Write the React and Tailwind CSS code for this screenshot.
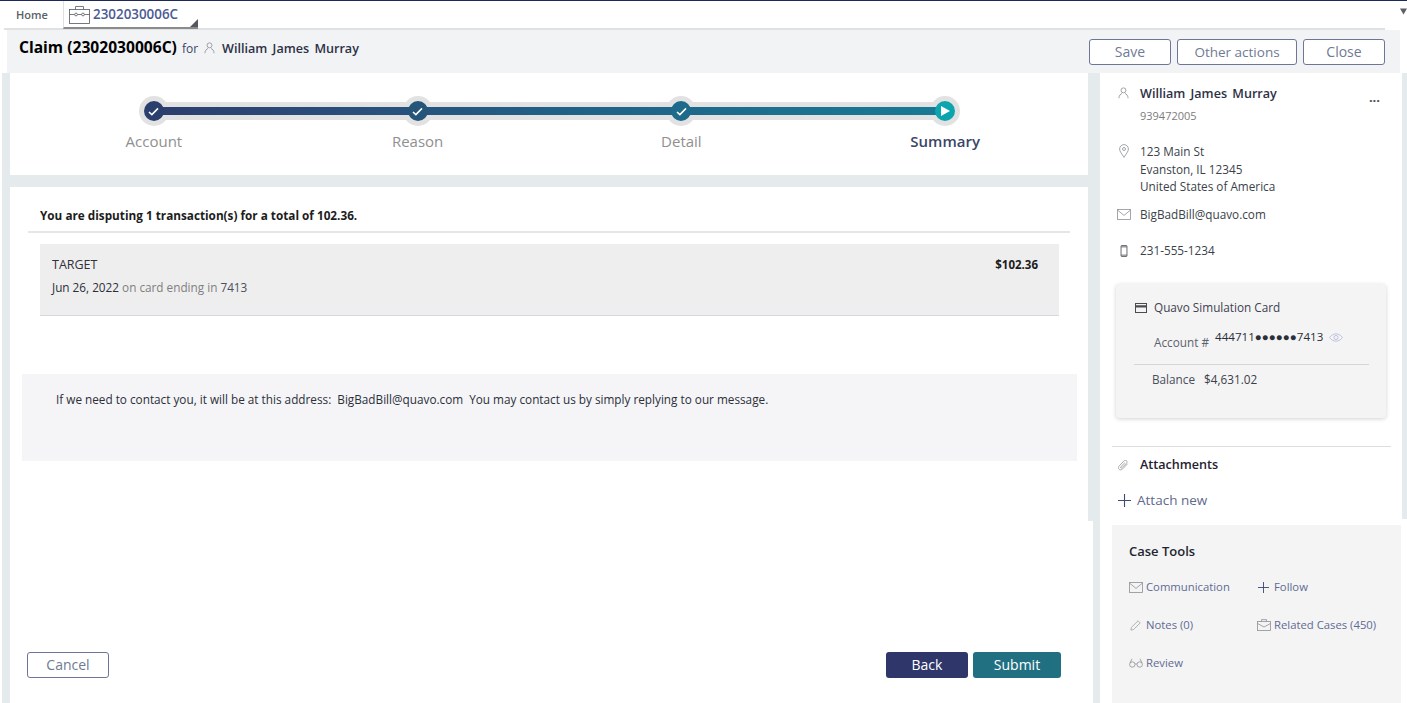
const ink = '#2b2f3a';

function PersonIcon({ className }) {
  return (
    <svg viewBox="0 0 12 13" fill="none" stroke="#8d9096" strokeWidth="0.9" className={className}>
      <circle cx="6" cy="3.6" r="2.7" />
      <path d="M1 12.2c0-3 2-4.7 3.4-5.2M11 12.2c0-3-2-4.7-3.4-5.2" />
    </svg>
  );
}

function MailIcon({ className }) {
  return (
    <svg viewBox="0 0 14 11" fill="none" stroke="#8d9096" strokeWidth="0.8" className={className}>
      <rect x="0.5" y="0.5" width="13" height="10" />
      <path d="M0.7 1.2 7 6.4l6.3-5.2" />
    </svg>
  );
}

function PlusIcon({ className }) {
  return (
    <svg viewBox="0 0 13 13" fill="none" stroke="#3f4a78" strokeWidth="1.1" className={className}>
      <path d="M6.5 0v13M0 6.5h13" />
    </svg>
  );
}

function Check() {
  return (
    <svg viewBox="0 0 12 10" fill="none" stroke="#fff" strokeWidth="1.7" className="w-[11px] h-[9px]">
      <path d="M1 5.5 4.2 8.5 11 1.5" />
    </svg>
  );
}

function Step({ label, current, color }) {
  return (
    <div className="flex flex-col items-center">
      <div className="w-[30px] h-[30px] rounded-full bg-[#e2e2e2] flex items-center justify-center">
        <div className="relative z-[2] w-[20px] h-[20px] rounded-full flex items-center justify-center" style={{ backgroundColor: color }}>
          {current ? (
            <svg viewBox="0 0 9 10" className="w-[9px] h-[10px] ml-[1px]"><path d="M0 0 9 5 0 10z" fill="#fff" /></svg>
          ) : <Check />}
        </div>
      </div>
      <div className={current ? "mt-[5px] text-[15px] leading-[20px] font-semibold text-[#3a4468]" : "mt-[5px] text-[15px] leading-[20px] text-[#8f8f8f]"}>{label}</div>
    </div>
  );
}

function OutlineBtn({ children, className }) {
  return (
    <button className={"h-[26px] rounded-[3px] border border-[#6f7599] bg-white leading-[22px] text-[#6f7a94] " + className}>{children}</button>
  );
}

function ToolLink({ icon, children }) {
  return (
    <div className="flex items-center h-[16px] text-[11.3px] text-[#5f6b95]">
      <span className="w-[17px] flex items-center shrink-0">{icon}</span>
      {children}
    </div>
  );
}

export default function App() {
  return (
    <div className="w-[1407px] h-[703px] overflow-hidden bg-white font-['Open_Sans',sans-serif] text-[11.75px]" style={{ color: ink }}>
      <div className="h-[1px] bg-[#1f2a5c]" />

      {/* tab bar */}
      <div className="h-[29px] flex items-start ml-[4px] mr-[22px] border-b-2 border-[#dfe1e3] relative">
        <div className="w-[59px] h-[27px] pl-[12px] text-[11px] font-semibold leading-[27px] text-[#5b5f66]">Home</div>
        <div className="w-[135px] h-[28px] border-l border-[#e0e0e0] border-b-2 border-b-[#8b8b8b] flex items-center pl-[5px] relative">
          <svg viewBox="0 0 21 19" fill="none" stroke="#55585e" strokeWidth="0.8" className="w-[21px] h-[19px]">
            <rect x="0.5" y="4.5" width="20" height="14" />
            <path d="M6.5 4.5V1.5h8v3M0.5 9.500h5M15.500 9.500h5M8.500 9.500h4" />
            <circle cx="7" cy="9.500" r="1.400" />
            <circle cx="14" cy="9.500" r="1.400" />
          </svg>
          <span className="ml-[3px] text-[13.4px] font-semibold text-[#4b5a92]">2302030006C</span>
          <svg viewBox="0 0 8 8" className="absolute right-0 bottom-0 w-[8px] h-[8px]"><path d="M8 0v8H0z" fill="#55585e" /></svg>
        </div>
        <svg viewBox="0 0 8 7" className="absolute right-[-22px] top-[7px] w-[7px] h-[7px]"><path d="M0 0h8L4 7z" fill="#5c5f66" /></svg>
      </div>

      {/* case header */}
      <div className="h-[43px] ml-[7px] w-[1393px] bg-[#f1f3f5] flex items-center justify-between pl-[12px] pr-[15px]">
        <div className="flex items-baseline mb-[7px]">
          <span className="text-[15.6px] font-bold text-black">Claim (2302030006C)</span>
          <span className="ml-[5px] text-[12px] text-[#3d4468]">for</span>
          <PersonIcon className="ml-[6px] w-[11px] h-[12px] self-center" />
          <span className="ml-[7px] text-[12.6px] font-semibold [word-spacing:2px] text-[#2d3145]">William James Murray</span>
        </div>
        <div className="flex gap-[6px] mt-[1px]">
          <OutlineBtn className="w-[82px] text-[14px]">Save</OutlineBtn>
          <OutlineBtn className="w-[120px] text-[13.5px]">Other actions</OutlineBtn>
          <OutlineBtn className="w-[82px] text-[14px]">Close</OutlineBtn>
        </div>
      </div>

      {/* body */}
      <div className="h-[630px] ml-[2px] pl-[8px] bg-[#e5eaed] flex">
        <div className="w-[1083px] flex flex-col">
          <div className="w-[1078px] h-[102px] bg-white pt-[23px] pl-[12px]">
            <div className="relative w-[1055px] grid grid-cols-4">
              <div className="absolute z-[1] left-[132px] right-[132px] top-[6px] h-[18px] bg-[#e2e2e2]">
                <div className="mt-[5px] h-[8px] bg-gradient-to-r from-[#2c3e6e] via-[#205f86] to-[#177b95]" />
              </div>
              <Step label="Account" color="#2b3f6e" />
              <Step label="Reason" color="#255578" />
              <Step label="Detail" color="#1d6a8a" />
              <Step label="Summary" current color="#0da5ad" />
            </div>
          </div>

          <div className="mt-[12px] w-[1078px] h-[334px] bg-white pt-[20px]">
            <div className="ml-[18px] w-[1042px] h-[26px] border-b-2 border-[#e6e6e6] pl-[12px] font-bold text-[#1c1c1c] leading-[17px]">
              You are disputing 1 transaction(s) for a total of 102.36.
            </div>
            <div className="mt-[11px] ml-[30px] w-[1019px] h-[72px] bg-[#eeeeee] border-b border-[#d5d8de] flex justify-between pl-[12px] pr-[21px] pt-[12px]">
              <div>
                <div className="text-[12.5px] leading-[17px] text-[#33303a]">TARGET</div>
                <div className="mt-[6px] leading-[17px]">
                  Jun 26, 2022 <span className="text-[#7f7f7f]">on card ending in</span> <span className="text-[#4a4e5a]">7413</span>
                </div>
              </div>
              <div className="text-[11.5px] font-bold leading-[17px] text-[#1c1c1c]">$102.36</div>
            </div>
            <div className="mt-[58px] ml-[12px] w-[1055px] h-[87px] bg-[#f5f5f7] pl-[34px] pt-[17px] leading-[17px] whitespace-pre">
              If we need to contact you, it will be at this address:  BigBadBill@quavo.com  You may contact us by simply replying to our message.
            </div>
          </div>

          <div className="flex-1 bg-white flex items-end justify-between pl-[17px] pr-[32px] pb-[25px]">
            <OutlineBtn className="w-[82px] text-[14px]">Cancel</OutlineBtn>
            <div className="flex gap-[5px]">
              <button className="w-[82px] h-[26px] pb-[2px] rounded-[3px] bg-[#2f366a] text-white text-[14px]">Back</button>
              <button className="w-[88px] h-[26px] pb-[2px] rounded-[3px] bg-[#217082] text-white text-[14px]">Submit</button>
            </div>
          </div>
        </div>

        {/* right column */}
        <div className="ml-[7px] w-[307px] flex flex-col">
          <div className="w-[302px] h-[446px] bg-white pt-[12px]">
            <div className="flex items-start pl-[18px] pr-[22px]">
              <PersonIcon className="mt-[2px] w-[11px] h-[12px]" />
              <div className="ml-[11px] flex-1">
                <div className="flex justify-between">
                  <span className="text-[12.6px] font-semibold leading-[18px] [word-spacing:2px] text-[#2d3145]">William James Murray</span>
                  <span className="text-[13px] font-bold leading-[24px] text-[#4a4e5a]">...</span>
                </div>
                <div className="text-[11px] leading-[13px] text-[#7c7c7c]">939472005</div>
              </div>
            </div>

            <div className="mt-[21px] flex items-start pl-[19px]">
              <svg viewBox="0 0 10 14" fill="none" stroke="#8d9096" strokeWidth="0.8" className="mt-[1px] w-[10px] h-[14px]">
                <path d="M5 13.400C3 10 .6 7.600.6 5a4.400 4.400 0 0 1 8.800 0c0 2.600-2.400 5-4.400 8.400z" />
                <circle cx="5" cy="5" r="1.500" />
              </svg>
              <div className="ml-[11px] leading-[17.5px] text-[#3b3f4a]">
                <div>123 Main St</div>
                <div>Evanston, IL 12345</div>
                <div>United States of America</div>
              </div>
            </div>

            <div className="mt-[10px] flex items-center pl-[17px] h-[18px] text-[#3b3f4a]">
              <MailIcon className="w-[14px] h-[11px]" />
              <span className="ml-[9px]">BigBadBill@quavo.com</span>
            </div>

            <div className="mt-[18px] flex items-center pl-[20px] h-[18px] text-[#3b3f4a]">
              <svg viewBox="0 0 8 13" fill="none" stroke="#5d6068" strokeWidth="1" className="w-[8px] h-[12px]">
                <rect x="0.800" y="0.500" width="6.400" height="12" rx="0.800" />
                <path d="M0.800 2h6.400M0.800 11h6.400" />
              </svg>
              <span className="ml-[12px]">231-555-1234</span>
            </div>

            <div className="mt-[24px] ml-[16px] w-[270px] h-[134px] bg-[#f4f4f4] rounded-[4px] shadow-[0_1px_4px_rgba(0,0,0,0.18)] pt-[15px]">
              <div className="flex items-center pl-[19px] h-[18px] text-[#3f4350]">
                <svg viewBox="0 0 12 10" className="w-[12px] h-[10px]">
                  <path d="M0 0h12v10H0z" fill="#4a4c52" />
                  <path d="M1 1h10v1.200H1zM1 4.600h10v4.400H1z" fill="#f4f4f4" />
                </svg>
                <span className="ml-[7px]">Quavo Simulation Card</span>
              </div>
              <div className="flex items-start pl-[38px] mt-[12px] h-[26px] text-[#5d6270]">
                <span className="mt-[5px] leading-[16px]">Account #</span>
                <span className="ml-[6px] leading-[16px] text-[11.6px] text-[#2b2f3a]">444711●●●●●●7413</span>
                <svg viewBox="0 0 15 9" fill="none" stroke="#a9b3d6" strokeWidth="0.8" className="ml-[6px] mt-[4px] w-[14px] h-[9px]">
                  <path d="M.5 4.500C3 1.500 5 .6 7.500.6s4.500.9 7 3.900c-2.500 3-4.500 3.900-7 3.900S3 7.500.5 4.500z" />
                  <circle cx="7.500" cy="4.500" r="2.200" />
                </svg>
              </div>
              <div className="mt-[9px] ml-[18px] w-[235px] border-t border-[#d6d6d6] pt-[6px] pl-[18px] leading-[17px] text-[#4a4e5a]">
                Balance <span className="ml-[6px] text-[#3b3f4a]">$4,631.02</span>
              </div>
            </div>

            <div className="mt-[28px] ml-[12px] w-[279px] border-t border-[#dddddd] pt-[10px]">
              <div className="flex items-center h-[18px]">
                <svg viewBox="0 0 12 12" fill="none" stroke="#9a9a9a" strokeWidth="0.9" className="ml-[6px] w-[11px] h-[11px]">
                  <path d="M10.500 4 5 9.800c-1.200 1.200-3 1.200-3.900.2-.9-1-.8-2.500.3-3.600L6.500 1c.9-.9 2.100-.9 2.800-.2.700.7.700 1.900-.1 2.700L4.300 8.500c-.4.400-1 .4-1.300.1-.3-.4-.3-.9.100-1.300L7.500 3" />
                </svg>
                <span className="ml-[11px] text-[12.6px] font-semibold text-[#1f2230]">Attachments</span>
              </div>
              <div className="mt-[16px] flex items-center h-[20px] text-[13.5px] text-[#5f6a8c]">
                <PlusIcon className="ml-[6px] w-[13px] h-[13px]" />
                <span className="ml-[6px]">Attach new</span>
              </div>
            </div>
          </div>

          <div className="flex-1 bg-white pt-[6px] pl-[12px]">
            <div className="w-[289px] h-[178px] bg-[#f4f4f4] pl-[17px] pt-[17px]">
              <div className="text-[13px] font-semibold leading-[18px] text-[#22252f]">Case Tools</div>
              <div className="mt-[19px] grid grid-cols-[128px_1fr] gap-y-[22px]">
                <ToolLink icon={<MailIcon className="w-[14px] h-[11px]" />}>Communication</ToolLink>
                <ToolLink icon={<PlusIcon className="ml-[1px] w-[11px] h-[11px]" />}>Follow</ToolLink>
                <ToolLink icon={
                  <svg viewBox="0 0 12 12" fill="none" stroke="#9a9a9a" strokeWidth="0.8" className="ml-[1px] w-[11px] h-[11px]">
                    <path d="M1 11l.6-3L8.800.9l2.300 2.300L3.900 10.400z" />
                  </svg>
                }>Notes (0)</ToolLink>
                <ToolLink icon={
                  <svg viewBox="0 0 14 12" fill="none" stroke="#8d9096" strokeWidth="0.8" className="w-[14px] h-[12px]">
                    <rect x="0.500" y="2.500" width="13" height="9" />
                    <path d="M4.500 2.500V.6h5v1.900M.5 4.500 7 8l6.500-3.500" />
                  </svg>
                }>Related Cases (450)</ToolLink>
                <ToolLink icon={
                  <svg viewBox="0 0 14 10" fill="none" stroke="#8d9096" strokeWidth="0.8" className="w-[14px] h-[10px]">
                    <circle cx="3.300" cy="6.500" r="2.700" />
                    <circle cx="10.700" cy="6.500" r="2.700" />
                    <path d="M6 6.200c.6-.5 1.400-.5 2 0M1 5 3 .8M13 5 11 .8" />
                  </svg>
                }>Review</ToolLink>
              </div>
            </div>
          </div>
        </div>
      </div>
    </div>
  );
}
